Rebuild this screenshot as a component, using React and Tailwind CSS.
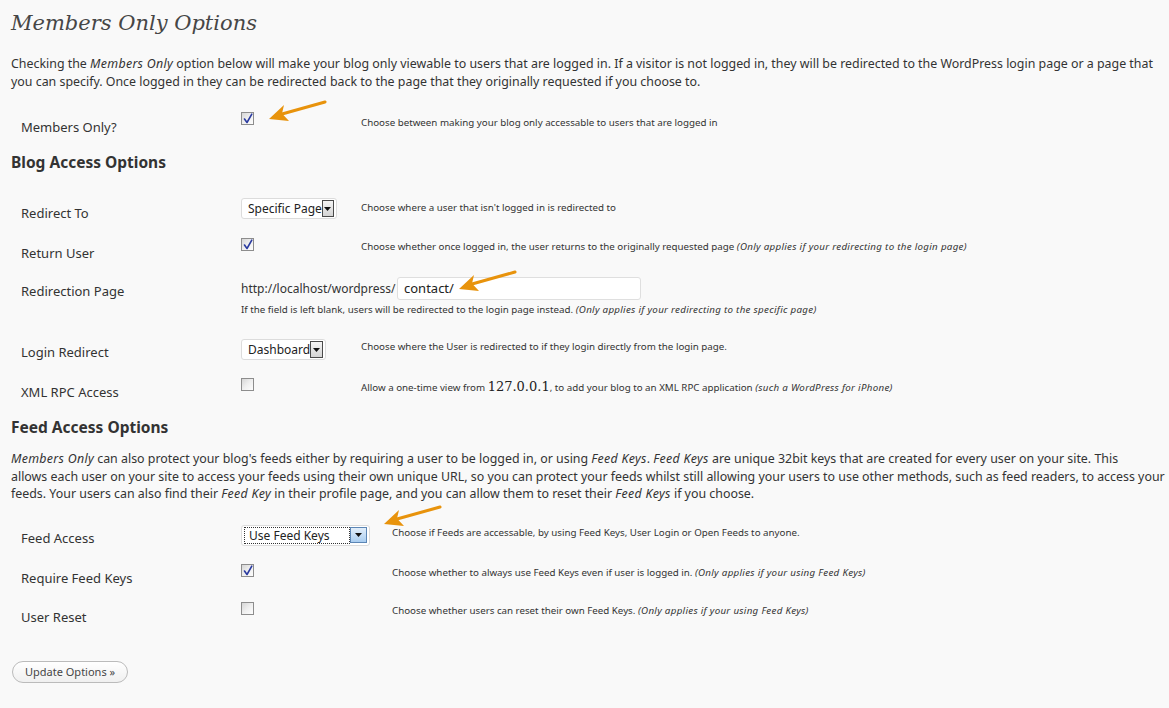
import React from "react";

const SANS = { fontFamily: '"Noto Sans", "Open Sans", sans-serif' };

function I({ children }) {
  return <i className="tracking-[0.3px]">{children}</i>;
}

function Check({ checked }) {
  return (
    <span className="relative inline-block w-[13px] h-[13px] border border-[#8d8d8d] bg-linear-to-br from-[#d6d6d6] via-[#efefef] to-[#fdfdfd]">
      {checked && (
        <svg className="absolute left-[1px] top-[0px]" width="10" height="11" viewBox="0 0 10 11">
          <path d="M1.5 6 L4 9.5 L8.8 1.2" fill="none" stroke="#2b3ba0" strokeWidth="1.6" strokeLinejoin="round" strokeLinecap="round" />
        </svg>
      )}
    </span>
  );
}

function DropBtn({ blue }) {
  return (
    <span
      className={
        blue
          ? "flex items-center justify-center w-[17px] h-[16px] border border-[#5c86b5] bg-linear-to-b from-[#e2eefa] to-[#a9cdf0]"
          : "flex items-center justify-center w-[17px] h-[17px] border border-[#4a4a4a] bg-linear-to-b from-[#f4f4f4] to-[#d4d4d4]"
      }
    >
      <svg width="7" height="4" viewBox="0 0 7 4">
        <path d="M0 0 H7 L3.5 4 Z" fill="#111" />
      </svg>
    </span>
  );
}

function Select({ label, width, focus }) {
  return (
    <span
      className={`flex items-center h-[21px] bg-white border border-[#dcdcdc] rounded-[3px] pl-[2px] pr-[2px] text-[12px] text-[#222] ${width}`}
      style={SANS}
    >
      {focus ? (
        <span className="flex-1 h-[17px] border border-dotted border-[#333] pl-[4px] leading-[15px]">{label}</span>
      ) : (
        <span className="flex-1 pl-[4px] leading-[17px] whitespace-nowrap">{label}</span>
      )}
      <DropBtn blue={focus} />
    </span>
  );
}

function Row({ h, label, lpt, control, cw, desc, dpt }) {
  return (
    <div className={`flex items-start ${h}`}>
      <div className={`w-[230px] pl-[10px] text-[13px] leading-[18px] text-[#333] ${lpt}`}>{label}</div>
      <div className={`${cw} flex`}>{control}</div>
      <div className={`text-[9.75px] leading-[14px] text-[#333] ${dpt}`}>{desc}</div>
    </div>
  );
}

function Arrow({ className }) {
  return (
    <svg className={`absolute ${className}`} width="60" height="24" viewBox="0 0 60 24">
      <path d="M57 2 L14 14" stroke="#e8930c" strokeWidth="3" strokeLinecap="round" />
      <path d="M1 19 L16 5 L14 13.5 L21 21 Z" fill="#e8930c" />
    </svg>
  );
}

export default function App() {
  return (
    <div className="relative w-[1169px] min-h-[708px] bg-[#f9f9f9] px-[11px] text-[#333]" style={SANS}>
      <h2
        className="pt-[7px] h-[39px] text-[21px] leading-[32px] italic text-[#464646]"
        style={{ fontFamily: '"DejaVu Serif", Georgia, serif' }}
      >
        Members Only Options
      </h2>

      <p className="mt-[16px] w-[1145px] text-[12.4px] leading-[18px]">
        Checking the <I>Members Only</I> option below will make your blog only viewable to users that are logged in. If a visitor is not logged in, they will be redirected to the WordPress login page or a page that you can specify. Once logged in they can be redirected back to the page that they originally requested if you choose to.
      </p>

      <div className="mt-[21px]">
        <Row
          h="h-[40px]"
          label="Members Only?"
          lpt="pt-[6px]"
          cw="w-[120px]"
          control={<Check checked />}
          dpt="pt-[4px]"
          desc="Choose between making your blog only accessable to users that are logged in"
        />
      </div>

      <h3 className="h-[20px] text-[15.5px] leading-[20px] font-bold text-[#333]">Blog Access Options</h3>

      <div className="mt-[26px]">
        <Row
          h="h-[40px]"
          label="Redirect To"
          lpt="pt-[6px]"
          cw="w-[120px]"
          control={<Select label="Specific Page" width="w-[96px]" />}
          dpt="pt-[3px]"
          desc="Choose where a user that isn't logged in is redirected to"
        />
        <Row
          h="h-[39px]"
          label="Return User"
          lpt="pt-[6px]"
          cw="w-[120px]"
          control={<Check checked />}
          dpt="pt-[2px]"
          desc={
            <>
              Choose whether once logged in, the user returns to the originally requested page{" "}
              <I>(Only applies if your redirecting to the login page)</I>
            </>
          }
        />
        <div className="flex items-start h-[62px]">
          <div className="w-[230px] pl-[10px] pt-[5px] text-[13px] leading-[18px]">Redirection Page</div>
          <div className="flex flex-col">
            <div className="flex items-center h-[23px]">
              <span className="text-[12px] w-[156px] whitespace-nowrap">http://localhost/wordpress/</span>
              <span className="flex items-center w-[244px] h-[23px] bg-white border border-[#dfdfdf] rounded-[3px] pl-[6px] text-[13px] text-[#222]">
                contact/
              </span>
            </div>
            <div className="mt-[3px] text-[9.75px] leading-[14px]">
              If the field is left blank, users will be redirected to the login page instead.{" "}
              <I>(Only applies if your redirecting to the specific page)</I>
            </div>
          </div>
        </div>
        <Row
          h="h-[39px]"
          label="Login Redirect"
          lpt="pt-[4px]"
          cw="w-[120px]"
          control={<Select label="Dashboard" width="w-[85px]" />}
          dpt="pt-[1px]"
          desc="Choose where the User is redirected to if they login directly from the login page."
        />
        <Row
          h="h-[39px]"
          label="XML RPC Access"
          lpt="pt-[5px]"
          cw="w-[120px]"
          control={<Check />}
          dpt="pt-[2px]"
          desc={
            <>
              Allow a one-time view from{" "}
              <span className="text-[13px] font-normal text-[#222]" style={{ fontFamily: '"DejaVu Serif", serif' }}>
                127.0.0.1
              </span>
              , to add your blog to an XML RPC application <I>(such a WordPress for iPhone)</I>
            </>
          }
        />
      </div>

      <h3 className="h-[20px] text-[15.5px] leading-[20px] font-bold">Feed Access Options</h3>

      <p className="mt-[13px] w-[1158px] text-[12.4px] leading-[17.5px]">
        <I>Members Only</I> can also protect your blog's feeds either by requiring a user to be logged in, or using <I>Feed Keys</I>.{" "}
        <I>Feed Keys</I> are unique 32bit keys that are created for every user on your site. This
        <br />
        allows each user on your site to access your feeds using their own unique URL, so you can protect your feeds whilst still allowing your users to use other methods, such as feed readers, to access your
        <br />
        feeds. Your users can also find their <I>Feed Key</I> in their profile page, and you can allow them to reset their <I>Feed Keys</I> if you choose.
      </p>

      <div className="mt-[22px]">
        <Row
          h="h-[39px]"
          label="Feed Access"
          lpt="pt-[4px]"
          cw="w-[151px]"
          control={<Select label="Use Feed Keys" width="w-[129px]" focus />}
          dpt="pt-[1px]"
          desc="Choose if Feeds are accessable, by using Feed Keys, User Login or Open Feeds to anyone."
        />
        <Row
          h="h-[38px]"
          label="Require Feed Keys"
          lpt="pt-[5px]"
          cw="w-[151px]"
          control={<Check checked />}
          dpt="pt-[2px]"
          desc={
            <>
              Choose whether to always use Feed Keys even if user is logged in.{" "}
              <I>(Only applies if your using Feed Keys)</I>
            </>
          }
        />
        <Row
          h="h-[30px]"
          label="User Reset"
          lpt="pt-[6px]"
          cw="w-[151px]"
          control={<Check />}
          dpt="pt-[2px]"
          desc={
            <>
              Choose whether users can reset their own Feed Keys. <I>(Only applies if your using Feed Keys)</I>
            </>
          }
        />
      </div>

      <div className="mt-[26px] pl-[1px] pb-[25px]">
        <button className="h-[22px] px-[12px] rounded-full border border-[#bbbbbb] bg-linear-to-b from-[#ffffff] to-[#f0f0f0] text-[11px] text-[#464646] leading-[20px]">
          Update Options »
        </button>
      </div>

      <Arrow className="left-[268px] top-[100px]" />
      <Arrow className="left-[458px] top-[270px]" />
      <Arrow className="left-[383px] top-[505px]" />
    </div>
  );
}
